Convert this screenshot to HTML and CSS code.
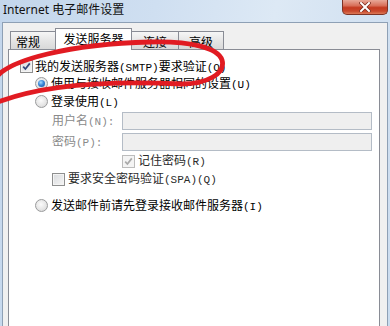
FILE: index.html
```html
<!DOCTYPE html>
<html lang="zh-CN">
<head>
<meta charset="utf-8">
<title>Internet 电子邮件设置</title>
<link rel="stylesheet" href="styles.css">
</head>
<body>
<div class="window">
  <div class="titlebar">
    <span class="title">Internet 电子邮件设置</span>
    <div class="close">
      <svg width="12" height="10" viewBox="0 0 12 10"><path d="M2 1 L10 9 M10 1 L2 9" stroke="#7a2a1c" stroke-width="3.4" stroke-linecap="square"/><path d="M2 1 L10 9 M10 1 L2 9" stroke="#ffffff" stroke-width="2" stroke-linecap="square"/></svg>
    </div>
  </div>
  <div class="client">
    <div class="tabs">
      <div class="tab t1">常规</div>
      <div class="tab sel">发送服务器</div>
      <div class="tab t3">连接</div>
      <div class="tab t4">高级</div>
    </div>
    <div class="panel">
      <div class="row r1">
        <span class="cb"><svg width="11" height="11" viewBox="0 0 11 11"><path d="M2.2 5.6 L4.4 8 L8.8 2.4" fill="none" stroke="#33467a" stroke-width="1.7"/></svg></span>
        <span class="lbl">我的发送服务器<span class="a">(SMTP)</span>要求验证<span class="a">(O)</span></span>
      </div>
      <div class="row r2">
        <span class="rb on"><span class="dot"></span></span>
        <span class="lbl">使用与接收邮件服务器相同的设置<span class="a">(U)</span></span>
      </div>
      <div class="row r3">
        <span class="rb"></span>
        <span class="lbl">登录使用<span class="a">(L)</span></span>
      </div>
      <div class="row r4">
        <span class="flabel">用户名<span class="a">(N):</span></span>
        <span class="input"></span>
      </div>
      <div class="row r5">
        <span class="flabel">密码<span class="a">(P):</span></span>
        <span class="input"></span>
      </div>
      <div class="row r6">
        <span class="cb dis"><svg width="11" height="11" viewBox="0 0 11 11"><path d="M2.2 5.6 L4.4 8 L8.8 2.4" fill="none" stroke="#a9a9a9" stroke-width="1.7"/></svg></span>
        <span class="lbl dim">记住密码<span class="a">(R)</span></span>
      </div>
      <div class="row r7">
        <span class="cb"></span>
        <span class="lbl dim">要求安全密码验证<span class="a">(SPA)(Q)</span></span>
      </div>
      <div class="row r8">
        <span class="rb"></span>
        <span class="lbl">发送邮件前请先登录接收邮件服务器<span class="a">(I)</span></span>
      </div>
    </div>
  </div>
  <svg class="annot" width="390" height="326" viewBox="0 0 390 326">
    <path d="M-4 78 C 8 60 70 44 150 42 C 192 41 218 48 222 60 C 226 74 206 84 182 84 C 120 81 48 83 -2 102" fill="none" stroke="#e11b22" stroke-width="4.8" stroke-linecap="round"/>
  </svg>
</div>
</body>
</html>
```
FILE: styles.css
```css
html, body {
  margin: 0;
  padding: 0;
  background: #f0f0f0;
}

.window {
  position: relative;
  width: 390px;
  height: 326px;
  overflow: hidden;
  background: linear-gradient(100deg, #c3d6ec 0%, #cfdff1 35%, #dde9f5 62%, #cbdcef 100%);
  font-family: "Noto Sans CJK SC", "Noto Sans", sans-serif;
  font-size: 12px;
  color: #000;
}

.titlebar {
  height: 22px;
  display: flex;
  align-items: flex-start;
}

.title {
  padding-left: 3px;
  padding-top: 2px;
  line-height: 16px;
  font-family: "Noto Sans", "Noto Sans CJK SC", sans-serif;
  font-size: 12px;
  color: #111;
}

.close {
  margin-left: auto;
  margin-right: 2px;
  width: 46px;
  height: 15px;
  box-sizing: border-box;
  border: 1px solid #7d3325;
  border-top: none;
  border-radius: 0 0 5px 5px;
  background: linear-gradient(#e8a898 0%, #d8705a 40%, #c43a20 55%, #c94a2e 80%, #dc7a58 100%);
  display: flex;
  align-items: center;
  justify-content: center;
}

.client {
  margin: 0 2px;
  height: 304px;
  box-sizing: border-box;
  border: 1px solid #8ea0b5;
  border-bottom: none;
  background: #f0f0f0;
  padding: 5px 6px 0 5px;
  overflow: hidden;
}

.tabs {
  display: flex;
  align-items: flex-end;
  height: 21px;
  padding-left: 2px;
  position: relative;
  z-index: 2;
}

.tab {
  box-sizing: border-box;
  height: 18px;
  border: 1px solid #898c95;
  border-bottom: none;
  background: linear-gradient(#f6f6f6, #e4e4e4 55%, #d9d9d9);
  display: flex;
  align-items: center;
  justify-content: center;
  line-height: 14px;
  padding-top: 2px;
}

.t1 { width: 46px; justify-content: flex-start; padding-left: 5px; }
.sel {
  width: 77px;
  margin-left: -1px;
  height: 22px;
  margin-bottom: -1px;
  background: #fff;
  padding-top: 0;
  padding-bottom: 1px;
}
.t3 { width: 48px; margin-left: -1px; }
.t4 { width: 46px; margin-left: -1px; }

.panel {
  position: relative;
  z-index: 1;
  width: 372px;
  height: 300px;
  box-sizing: border-box;
  border: 1px solid #898c95;
  background: #fff;
  padding-top: 8px;
  display: flex;
  flex-direction: column;
}

.row {
  display: flex;
  align-items: center;
  height: 17px;
  white-space: nowrap;
}

.r1 { padding-left: 11px; }
.r2 { padding-left: 26px; }
.r3 { padding-left: 26px; margin-top: 1px; }
.r4 { padding-left: 43px; height: 18px; margin-top: 2px; }
.r5 { padding-left: 43px; height: 18px; margin-top: 3px; }
.r6 { padding-left: 113px; height: 16px; margin-top: 2px; }
.r7 { padding-left: 43px; height: 16px; margin-top: 2px; }
.r8 { padding-left: 26px; margin-top: 10px; }

.lbl {
  margin-left: 3px;
  line-height: 14px;
}

.r1 .lbl { margin-left: 2px; }

.dim { color: #2a2a2a; }

.a {
  font-family: "Liberation Mono", "DejaVu Sans Mono", monospace;
  font-size: 11px;
}

.flabel {
  width: 70px;
  color: #8a8a8a;
  line-height: 14px;
}

.input {
  width: 250px;
  height: 18px;
  box-sizing: border-box;
  border: 1px solid #b4bcc6;
  background: #efefef;
}

.cb {
  width: 13px;
  height: 13px;
  box-sizing: border-box;
  border: 1px solid #8e8f8f;
  box-shadow: inset 0 0 0 1px #f4f4f4;
  background: linear-gradient(135deg, #d8dadd, #f6f6f6);
  display: flex;
  align-items: center;
  justify-content: center;
  flex: none;
}

.cb.dis {
  border-color: #bcbcbc;
  background: #f4f4f4;
}

.rb {
  width: 13px;
  height: 13px;
  box-sizing: border-box;
  border-radius: 50%;
  border: 1px solid #9a9b9c;
  background: radial-gradient(circle at 45% 40%, #fbfbfb 0%, #e6e6e6 55%, #cfcfcf 100%);
  display: flex;
  align-items: center;
  justify-content: center;
  flex: none;
}

.dot {
  width: 7px;
  height: 7px;
  border-radius: 50%;
  background: radial-gradient(circle at 40% 35%, #a6dcff 0%, #3a86d6 45%, #174d9a 100%);
}

.annot {
  position: absolute;
  left: 0;
  top: 0;
  z-index: 5;
  pointer-events: none;
}
```
